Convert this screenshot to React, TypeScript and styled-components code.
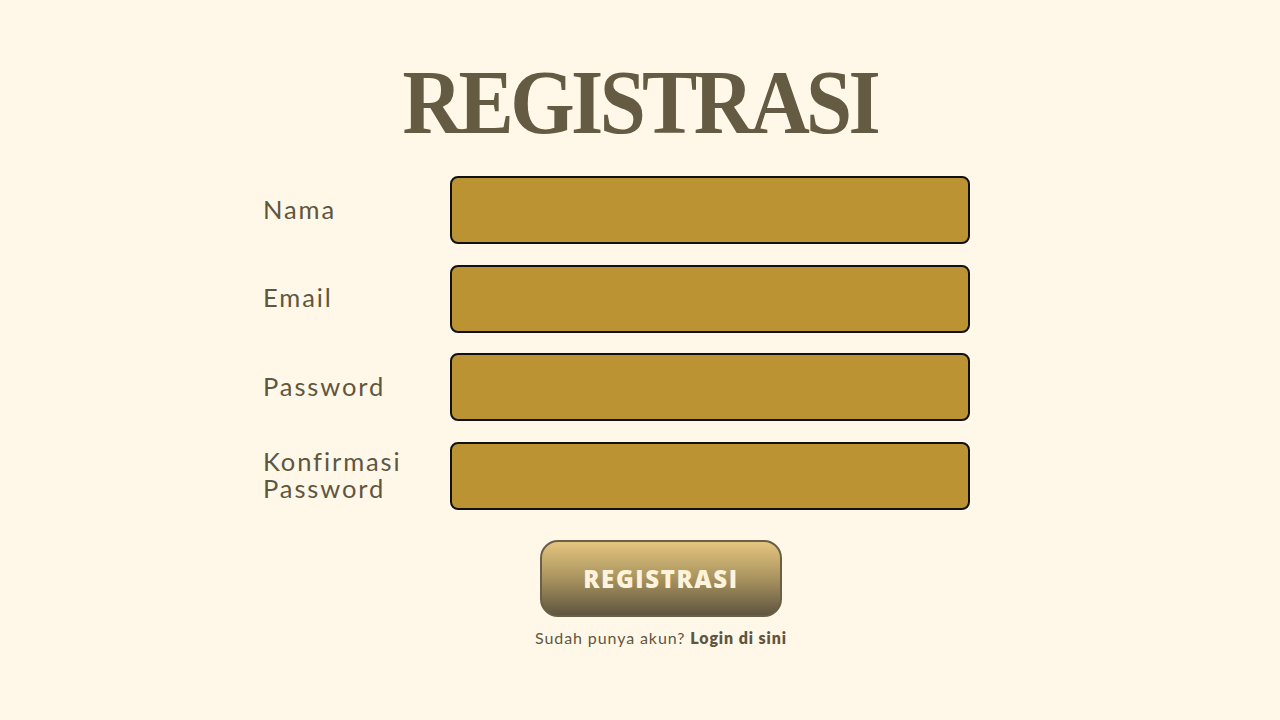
import React from "react";
import styled, { createGlobalStyle } from "styled-components";

const Global = createGlobalStyle`
  html, body { margin: 0; padding: 0; background: #fff8e8; }
  body { font-family: "Lato", "Noto Sans", sans-serif; }
`;

const Page = styled.div`
  width: 1280px;
  height: 720px;
  background: #fff8e8;
  display: flex;
  flex-direction: column;
  align-items: flex-start;
  overflow: hidden;
`;

const Title = styled.h1`
  align-self: center;
  margin: 52px 0 0 0;
  font-family: "Liberation Serif", "DejaVu Serif", serif;
  font-weight: 700;
  font-size: 92px;
  line-height: 100px;
  color: #655a42;
  letter-spacing: -4px;
  transform: scaleX(0.9);
`;

const Form = styled.form`
  margin: 24px 0 0 263px;
  display: grid;
  grid-template-columns: 187px 520px;
  row-gap: 20.7px;
  align-items: center;
`;

const Label = styled.label`
  font-family: "Lato", sans-serif;
  font-size: 25.5px;
  line-height: 27px;
  letter-spacing: 1.9px;
  color: #5f5640;
  margin-bottom: 2px;
`;

const Input = styled.input`
  box-sizing: border-box;
  width: 520px;
  height: 68px;
  background: #bb9333;
  border: 2px solid #111;
  border-radius: 8px;
  outline: none;
  font-size: 20px;
  padding: 0 16px;
`;

const Footer = styled.div`
  align-self: stretch;
  margin-top: 30px;
  padding-left: 42px;
  display: flex;
  flex-direction: column;
  align-items: center;
  gap: 11px;
`;

const Button = styled.button`
  box-sizing: border-box;
  width: 242px;
  height: 77px;
  border-radius: 18px;
  border: 2px solid #6b6047;
  background: linear-gradient(180deg, #e5c57f 0%, #a8935f 50%, #5f5640 100%);
  color: #fff3dc;
  font-family: "Open Sans", "Lato", sans-serif;
  font-weight: 800;
  font-size: 24px;
  letter-spacing: 1.6px;
  cursor: pointer;
`;

const Note = styled.p`
  margin: 0;
  font-family: "Lato", sans-serif;
  font-size: 16px;
  letter-spacing: 0.9px;
  color: #5f5640;
`;

const Strong = styled.b`
  font-weight: 800;
`;

const fields = ["Nama", "Email", "Password", "Konfirmasi Password"];

export default function App() {
  return (
    <Page>
      <Global />
      <Title>REGISTRASI</Title>
      <Form onSubmit={(e) => e.preventDefault()}>
        {fields.map((f) => (
          <React.Fragment key={f}>
            <Label>{f}</Label>
            <Input type={f.includes("Password") ? "password" : "text"} />
          </React.Fragment>
        ))}
      </Form>
      <Footer>
        <Button type="button">REGISTRASI</Button>
        <Note>
          Sudah punya akun? <Strong>Login di sini</Strong>
        </Note>
      </Footer>
    </Page>
  );
}
